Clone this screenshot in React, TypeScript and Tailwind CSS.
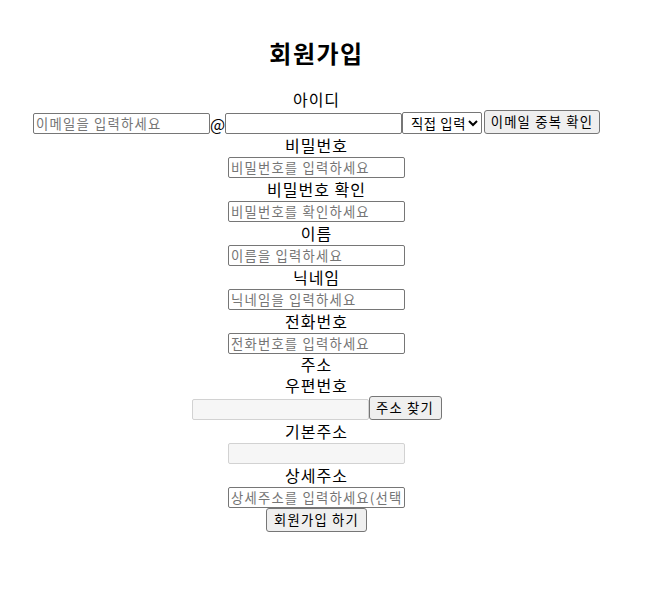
const inputClass =
  'h-[21px] w-[177px] rounded-[2px] border border-[#767676] bg-white px-[2px] text-[13.33px] leading-[19px] tracking-[1.2px] text-black outline-none placeholder:text-[#757575]'
const readOnlyClass =
  'h-[21px] w-[177px] rounded-[2px] border border-[#d2d2d2] bg-[#f6f6f6] px-[2px] text-[13.33px] leading-[19px] outline-none'
const buttonClass =
  'h-[24px] rounded-[3px] border border-[#767676] bg-[#efefef] px-[4px] text-[13.33px] leading-[20px] tracking-[1.2px] text-black'

function Label({ children, h = 'h-[23px]' }: { children: React.ReactNode; h?: string }) {
  return (
    <label className={`${h} flex items-center justify-center text-base leading-[21px] tracking-[1px] text-black`}>
      {children}
    </label>
  )
}

export default function App() {
  return (
    <div className="min-h-[614px] w-[655px] bg-white font-['Noto_Sans_CJK_KR','Noto_Sans',sans-serif]">
      <form className="flex w-[633px] flex-col items-center pt-[37px]">
        <h2 className="mb-[19px] text-2xl leading-[32px] font-bold tracking-[1.5px] text-black">회원가입</h2>

        <Label h="h-[22px]">아이디</Label>
        <div className="flex h-[24px] items-end">
          <input className={inputClass} placeholder="이메일을 입력하세요" />
          <span className="flex h-[21px] w-[15px] items-center justify-center text-base">@</span>
          <input className={inputClass} />
          <select className="h-[22px] w-[80px] rounded-[2px] border border-[#767676] bg-white pl-[4px] text-[13.33px] tracking-[0.6px] text-black">
            <option>직접 입력</option>
            <option>naver.com</option>
            <option>gmail.com</option>
          </select>
          <button type="button" className={`${buttonClass} ml-[2px] w-[116px]`}>
            이메일 중복 확인
          </button>
        </div>

        <Label>비밀번호</Label>
        <input type="password" className={inputClass} placeholder="비밀번호를 입력하세요" />

        <Label>비밀번호 확인</Label>
        <input type="password" className={inputClass} placeholder="비밀번호를 확인하세요" />

        <Label>이름</Label>
        <input className={inputClass} placeholder="이름을 입력하세요" />

        <Label>닉네임</Label>
        <input className={inputClass} placeholder="닉네임을 입력하세요" />

        <Label>전화번호</Label>
        <input className={inputClass} placeholder="전화번호를 입력하세요" />

        <Label h="h-[21px]">주소</Label>
        <Label h="h-[21px]">우편번호</Label>
        <div className="flex h-[24px] items-end">
          <input className={readOnlyClass} readOnly />
          <button type="button" className={`${buttonClass} w-[73px]`}>
            주소 찾기
          </button>
        </div>

        <Label>기본주소</Label>
        <input className={readOnlyClass} readOnly />

        <Label>상세주소</Label>
        <input className={inputClass} placeholder="상세주소를 입력하세요(선택)" />

        <button type="submit" className={`${buttonClass} w-[101px]`}>
          회원가입 하기
        </button>
      </form>
    </div>
  )
}
